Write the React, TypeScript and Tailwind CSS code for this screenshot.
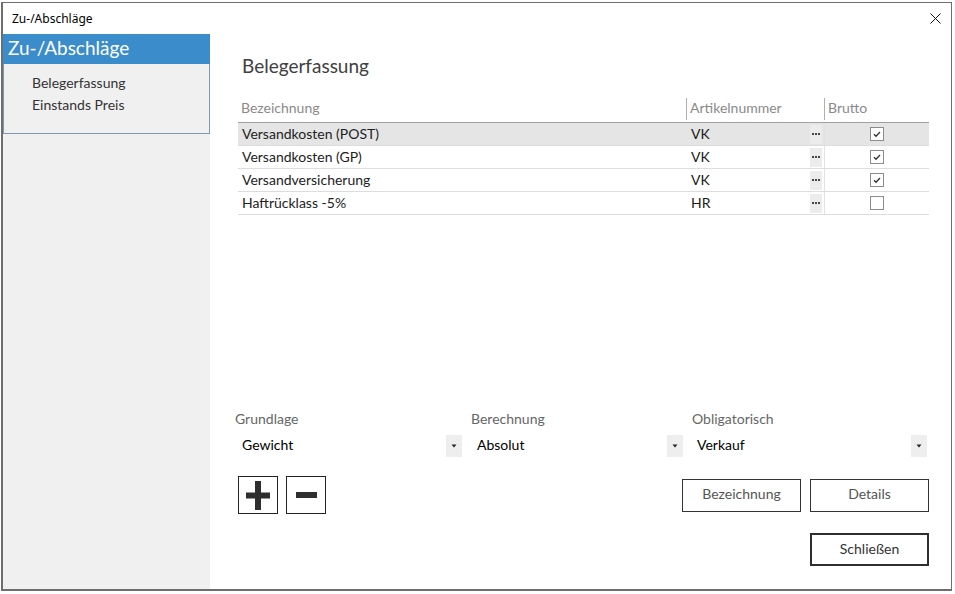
import React from 'react';

const rows = [
  { name: 'Versandkosten (POST)', nr: 'VK', brutto: true, selected: true },
  { name: 'Versandkosten (GP)', nr: 'VK', brutto: true, selected: false },
  { name: 'Versandversicherung', nr: 'VK', brutto: true, selected: false },
  { name: 'Haftrücklass -5%', nr: 'HR', brutto: false, selected: false },
];

function Dots() {
  return (
    <div className="w-[12px] h-[19px] bg-[#ececec] flex items-center justify-center gap-[1px]">
      <div className="w-[2px] h-[2px] bg-[#444]" />
      <div className="w-[2px] h-[2px] bg-[#444]" />
      <div className="w-[2px] h-[2px] bg-[#444]" />
    </div>
  );
}

function Checkbox({ checked }: { checked: boolean }) {
  return (
    <div className="w-[14px] h-[14px] border border-[#8c8c8c] bg-white flex items-center justify-center">
      {checked && (
        <svg width="10" height="10" viewBox="0 0 10 10">
          <path d="M2 5.2 L4 7.2 L8 3" fill="none" stroke="#333" strokeWidth="1.3" />
        </svg>
      )}
    </div>
  );
}

function Select({ value, width, pad }: { value: string; width: string; pad: string }) {
  return (
    <div className={`${width} h-[22px] flex items-center`}>
      <span className={`${pad} flex-1 text-[14px] leading-[18px] pb-[3px] text-black`}>{value}</span>
      <div className="w-[16px] h-[22px] bg-[#eeeeee] flex items-center justify-center">
        <svg width="6" height="4" viewBox="0 0 6 4">
          <path d="M0.5 0.5 L5.5 0.5 L3 3.5 Z" fill="#222" />
        </svg>
      </div>
    </div>
  );
}

export default function App() {
  return (
    <div className="w-[955px] h-[594px] bg-white pt-[2px] pl-[1px]" style={{ fontFamily: 'Lato, "Noto Sans", sans-serif' }}>
      <div className="w-[951px] h-[589px] border-t border-r border-l-2 border-b-2 border-[#6e6e6e] flex flex-col">
        {/* title bar */}
        <div className="h-[31px] flex items-center justify-between pl-[9px] pr-[10px]">
          <span className="text-[12px] text-black" style={{ fontFamily: '"Noto Sans", sans-serif' }}>Zu-/Abschläge</span>
          <svg width="11" height="11" viewBox="0 0 11 11">
            <path d="M0.5 0.5 L10.5 10.5 M10.5 0.5 L0.5 10.5" stroke="#111" strokeWidth="1" />
          </svg>
        </div>
        <div className="flex flex-1">
          {/* sidebar */}
          <div className="w-[207px] bg-[#f0f0f0] flex flex-col">
            <div className="h-[30px] bg-[#3a8ccb] flex items-center pl-[5px] pb-[4px]">
              <span className="text-[19px] text-white leading-none">Zu-/Abschläge</span>
            </div>
            <div className="h-[70px] border-r border-b border-l border-[#8098b3] pl-[28px] pt-[8px] flex flex-col">
              <span className="h-[22px] leading-[22px] text-[14px] text-[#333]">Belegerfassung</span>
              <span className="h-[22px] leading-[22px] text-[14px] text-[#333]">Einstands Preis</span>
            </div>
          </div>
          {/* main */}
          <div className="flex-1 flex flex-col pl-[28px] pr-[22px]">
            <h1 className="mt-[20px] pl-[4px] h-[24px] leading-[24px] text-[19px] text-[#404040]">Belegerfassung</h1>
            <div className="mt-[20px]">
              <div className="flex h-[25px] border-b border-[#a0a0a0] text-[14px] text-[#8a8a8a]">
                <div className="w-[448px] pl-[3px] leading-[20px]">Bezeichnung</div>
                <div className="w-[138px] h-[22px] border-l border-[#b0b0b0] pl-[3px] leading-[20px]">Artikelnummer</div>
                <div className="flex-1 h-[22px] border-l border-[#b0b0b0] pl-[3px] leading-[20px]">Brutto</div>
              </div>
              {rows.map((r) => (
                <div
                  key={r.name}
                  className={`flex h-[23px] border-b border-[#dddddd] text-[14px] text-[#222] ${r.selected ? 'bg-[#e5e5e5]' : ''}`}
                >
                  <div className="w-[448px] pl-[4px] pb-[2px] flex items-center">{r.name}</div>
                  <div className="w-[138px] pl-[5px] pr-[2px] flex items-center justify-between">
                    <span className="pb-[2px] text-[#1a1a1a]">{r.nr}</span>
                    <Dots />
                  </div>
                  <div className="flex-1 border-l border-[#e2e2e2] flex items-center justify-center">
                    <Checkbox checked={r.brutto} />
                  </div>
                </div>
              ))}
            </div>

            {/* bottom controls */}
            <div className="mt-[194px] -ml-[3px] flex gap-[9px]">
              <div className="w-[227px] flex flex-col">
                <span className="h-[20px] leading-[20px] text-[14px] text-[#666]">Grundlage</span>
                <div className="mt-[6px]"><Select value="Gewicht" width="w-[227px]" pad="pl-[7px]" /></div>
              </div>
              <div className="w-[212px] flex flex-col">
                <span className="h-[20px] leading-[20px] text-[14px] text-[#666]">Berechnung</span>
                <div className="mt-[6px]"><Select value="Absolut" width="w-[212px]" pad="pl-[6px]" /></div>
              </div>
              <div className="w-[235px] flex flex-col">
                <span className="h-[20px] leading-[20px] text-[14px] text-[#666]">Obligatorisch</span>
                <div className="mt-[6px]"><Select value="Verkauf" width="w-[235px]" pad="pl-[5px]" /></div>
              </div>
            </div>

            <div className="mt-[19px] flex items-center">
              <button className="w-[40px] h-[38px] border border-[#222] flex items-center justify-center">
                <svg width="24" height="29" viewBox="0 0 24 29">
                  <rect x="0" y="11.5" width="24" height="6" fill="#2e2e2e" />
                  <rect x="9" y="0" width="6" height="29" fill="#2e2e2e" />
                </svg>
              </button>
              <button className="ml-[8px] w-[40px] h-[38px] border border-[#222] flex items-center justify-center">
                <svg width="21" height="6" viewBox="0 0 21 6">
                  <rect x="0" y="0" width="21" height="6" fill="#2e2e2e" />
                </svg>
              </button>
              <button className="ml-auto w-[119px] h-[33px] pb-[3px] border border-[#333] text-[14px] text-[#555]">Bezeichnung</button>
              <button className="ml-[9px] w-[119px] h-[33px] pb-[3px] border border-[#333] text-[14px] text-[#555]">Details</button>
            </div>

            <div className="mt-[19px] flex justify-end">
              <button className="w-[119px] h-[33px] pb-[3px] border-2 border-[#2e2e2e] text-[14px] text-[#333]">Schließen</button>
            </div>
          </div>
        </div>
      </div>
    </div>
  );
}
